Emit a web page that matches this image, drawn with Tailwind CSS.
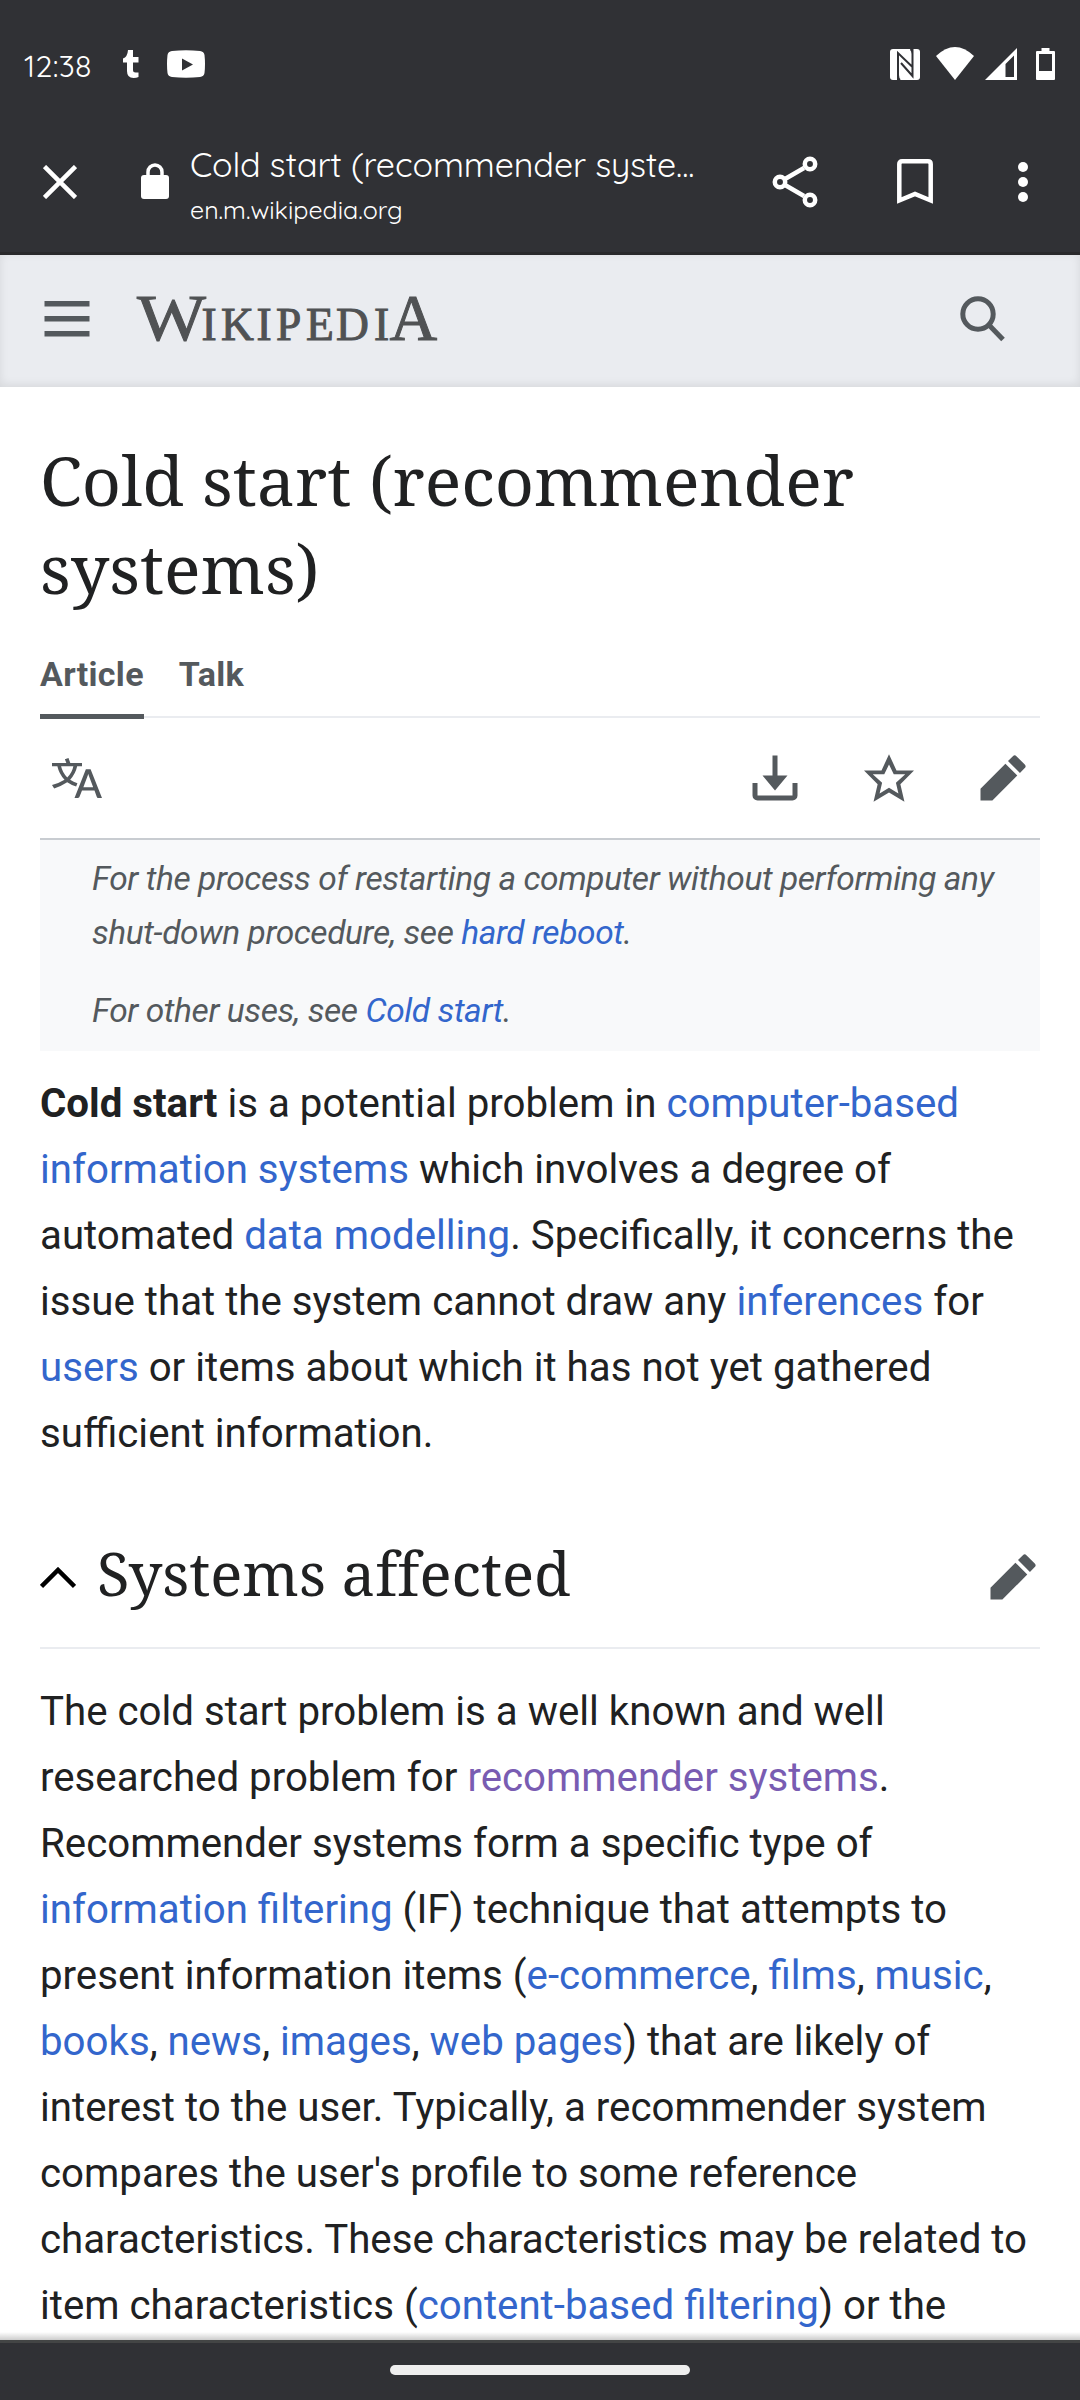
<!DOCTYPE html>
<html lang="en">
<head>
<meta charset="utf-8">
<title>Cold start (recommender systems)</title>
<script src="https://cdn.jsdelivr.net/npm/@tailwindcss/browser@4"></script>
</head>
<body class="w-[1080px] h-[2400px] overflow-hidden bg-white flex flex-col font-[Roboto,sans-serif] text-[#202122]">
<header class="h-[255px] shrink-0 bg-[#303135] border-b-[3px] border-[#29292b] text-white flex flex-col font-[Quicksand,Lato,sans-serif]">
  <div class="h-[110px] pt-[44px] pl-6 pr-[25px] flex items-start">
    <span class="w-[99px] pt-[4px] text-[30.500px] leading-[36px] tracking-[0.3px] font-normal">12:38</span>
    <svg class="w-[16px] h-[28px] mt-[6px]" viewBox="0 0 16 28" fill="#fff"><path d="M5 0h5v7h5.5v5.500H10v7.500q0 2.500 2.500 2.500h3V27q-2 1-5 1-6.500 0-6.500-7v-8.500H0V8.500Q4.500 7 5 0z"/></svg>
    <svg class="w-[38px] h-[28px] mt-[6px] ml-[28px]" viewBox="0 0 38 28"><path fill="#fff" d="M5 1Q19-.6 33 1q4 .4 4.500 4 1 9 0 18-.5 3.600-4.500 4-14 1.400-28 0-4-.4-4.500-4-1-9 0-18Q1 1.400 5 1z"/><path fill="#303135" d="M15 8.500v12l11-6z"/></svg>
    <div class="flex-1"></div>
    <svg class="w-[30px] h-[31px] mt-[5px]" viewBox="0 0 30 31"><rect width="30" height="31" rx="3" fill="#fff"/><path d="M8 31V4L22.500 18M22.500 0v27L11 14M10 31q-2-1.500-2-5M20.500 0q2 1.500 2 5" fill="none" stroke="#303135" stroke-width="2"/></svg>
    <svg class="w-[38px] h-[33px] mt-[3px] ml-[16px]" viewBox="0 0 38 33"><path fill="#fff" d="M0 9Q19-9 38 9L19 33z"/></svg>
    <svg class="w-[32px] h-[32px] mt-[4px] ml-[11px]" viewBox="0 0 32 32"><path fill="#fff" fill-rule="evenodd" d="M32 0v32H0zM29 7.500L20.500 16v13H29z"/></svg>
    <svg class="w-[19px] h-[32px] mt-[4px] ml-[19px]" viewBox="0 0 19 32"><path fill="#fff" fill-rule="evenodd" d="M5.500 0h8v3H18q1 0 1 1v27q0 1-1 1H1q-1 0-1-1V4q0-1 1-1h4.500zM3 6v17h13V6z"/></svg>
  </div>
  <div class="h-[142px] flex items-start pl-[43px]">
    <svg class="w-[34px] h-[34px] mt-[55px]" viewBox="0 0 34 34"><path d="M1.500 1.500l31 31m0-31l-31 31" stroke="#fff" stroke-width="4.500"/></svg>
    <svg class="w-[28px] h-[36px] mt-[53px] ml-[64px]" viewBox="0 0 28 36"><rect y="12" width="28" height="24" rx="3" fill="#fff"/><path d="M7 14V9a7 7 0 0 1 14 0v5" fill="none" stroke="#fff" stroke-width="3.500"/></svg>
    <div class="w-[582px] ml-[21px] pt-[33px] whitespace-nowrap">
      <div class="text-[34px] leading-[44px] tracking-[-0.1px] font-normal">Cold start (recommender syste...</div>
      <div class="text-[25px] leading-[34px] mt-[6px]">en.m.wikipedia.org</div>
    </div>
    <svg class="w-[46px] h-[52px] mt-[46px]" viewBox="0 0 46 52" fill="none" stroke="#fff" stroke-width="4.500"><path d="M13 23L32 12M13 29L32 40"/><circle cx="8" cy="26" r="5.200"/><circle cx="38" cy="8" r="5.200"/><circle cx="38" cy="44" r="5.200"/></svg>
    <svg class="w-[36px] h-[46px] mt-[49px] ml-[79px]" viewBox="0 0 36 46"><path d="M2.300 41.500V5q0-2.700 2.700-2.700h26q2.700 0 2.700 2.700v36.500L18 35z" fill="none" stroke="#fff" stroke-width="4.500"/></svg>
    <svg class="w-[10px] h-[42px] mt-[51px] ml-[85px]" viewBox="0 0 10 42" fill="#fff"><circle cx="5" cy="6" r="5"/><circle cx="5" cy="21" r="5"/><circle cx="5" cy="36" r="5"/></svg>
  </div>
</header>
<div class="h-[132px] shrink-0 bg-[#eaecf0] shadow-[inset_0_-2px_10px_rgba(0,0,0,0.09)] flex items-start pl-[44px] pr-[74px]">
  <svg class="w-[46px] h-[36px] mt-[46px]" viewBox="0 0 46 36" fill="#54595d"><path d="M.5 0h45v5.500H.5zM.5 15h45v5.500H.5zM.5 30h45v5.500H.5z"/></svg>
  <svg class="w-[304px] h-[92px] mt-[16px] ml-[46px]" viewBox="136 271 304 92" fill="#505254" stroke="#505254" stroke-width="1" font-family="'Liberation Serif',serif" font-size="66"><text y="340"><tspan x="137" textLength="69" lengthAdjust="spacingAndGlyphs">W</tspan><tspan font-size="45.500" x="201.500 221 256.500 276 306 336 374">IKIPEDI</tspan><tspan x="389.500">A</tspan></text></svg>
  <div class="flex-1"></div>
  <svg class="w-[46px] h-[46px] mt-[41px]" viewBox="0 0 46 46" fill="none" stroke="#54595d" stroke-width="5"><circle cx="18" cy="18" r="15.200"/><path d="M28.500 28.500L43 43.500"/></svg>
</div>
<main class="h-[1953px] shrink-0 overflow-hidden px-10 whitespace-nowrap flex flex-col">
  <h1 class="mt-[49px] h-[178px] text-[68.200px] leading-[88px] font-['Noto_Serif','DejaVu_Serif_Condensed','DejaVu_Serif',serif]">Cold start (recommender<br>systems)</h1>
  <nav class="mt-[34px] h-[71px] flex gap-[35px] items-start text-[34px] leading-[52px] tracking-[0.3px] font-bold text-[#54595d] bg-[linear-gradient(#eaecf0,#eaecf0)] bg-no-repeat bg-[length:100%_2px] bg-[position:0_68px]">
    <a class="h-[71px] border-b-[5px] border-[#54595d]">Article</a><a>Talk</a>
  </nav>
  <div class="h-[121px] border-b-2 border-[#c8ccd1] flex items-start pt-[34px] pl-3 pr-[12px] text-[#54595d]">
    <svg class="w-[50px] h-[50px]" viewBox="0 0 20 20" fill="currentColor"><path d="M20 18h-1.440a.61.61 0 0 1-.4-.12.81.81 0 0 1-.23-.31L17 15h-5l-1 2.540a.77.77 0 0 1-.22.3.59.59 0 0 1-.4.14H9l4.550-11.470h1.890zm-3.530-4.310L14.890 9.500a11.620 11.620 0 0 1-.39-1.240q-.09.37-.19.69l-.19.56-1.580 4.190zm-6.300-1.580a13.430 13.430 0 0 1-2.910-1.410 11.460 11.460 0 0 0 2.810-5.370H12V4H7.310a4 4 0 0 0-.2-.56C6.870 2.790 6.600 2 6.600 2l-1.470.5s.4.89.6 1.500H0v1.330h2.150A11.230 11.230 0 0 0 5 10.700a17.190 17.190 0 0 1-5 2.100q.56.82.87 1.380a23.280 23.280 0 0 0 5.220-2.510 15.640 15.640 0 0 0 3.560 1.770zM3.630 5.330h4.910a8.110 8.110 0 0 1-2.450 4.450 9.110 9.110 0 0 1-2.460-4.450z"/></svg>
    <div class="flex-1"></div>
    <svg class="w-[50px] h-[50px]" viewBox="0 0 20 20" fill="currentColor"><path d="M17 12v5H3v-5H1v5a2 2 0 0 0 2 2h14a2 2 0 0 0 2-2v-5zM15 9h-4V1H9v8H5l5 6z"/></svg>
    <svg class="w-[50px] h-[50px] ml-16" viewBox="0 0 20 20" fill="currentColor"><path d="M20 7h-7L10 .5 7 7H0l5.460 5.470-1.640 7 6.180-3.700 6.180 3.730-1.630-7zm-10 6.900-3.760 2.270 1-4.280L3.500 8.500h4.610L10 4.600l1.900 3.900h4.600l-3.730 3.400 1 4.280z"/></svg>
    <svg class="w-[50px] h-[50px] ml-16" viewBox="0 0 20 20" fill="currentColor"><path d="m16.770 8 1.940-2a1 1 0 0 0 0-1.410l-3.340-3.300a1 1 0 0 0-1.410 0L12 3.230zM1 14.250V19h4.750l9.960-9.960-4.750-4.750z"/></svg>
  </div>
  <div class="h-[211px] bg-[#f8f9fa] pl-[52px] pt-[12px] text-[33.500px] tracking-[-0.41px] leading-[54px] italic text-[#54595d]">
    <p>For the process of restarting a computer without performing any<br>shut-down procedure, see <a class="text-[#3366cc]">hard reboot</a>.</p>
    <p class="mt-6">For other uses, see <a class="text-[#3366cc]">Cold start</a>.</p>
  </div>
  <p class="mt-[20px] text-[40.240px] leading-[66px]"><b>Cold start</b> is a potential problem in <a class="text-[#3366cc]">computer-based<br>information systems</a> which involves a degree of<br>automated <a class="text-[#3366cc]">data modelling</a>. Specifically, it concerns the<br>issue that the system cannot draw any <a class="text-[#3366cc]">inferences</a> for<br><a class="text-[#3366cc]">users</a> or items about which it has not yet gathered<br>sufficient information.</p>
  <div class="mt-[69px] h-[113px] border-b-2 border-[#eaecf0] flex items-start pr-[2px]">
    <svg class="w-[36px] h-[22px] mt-[31px]" viewBox="0 0 36 22"><path d="M1.500 19.500L18 3l16.500 16.500" fill="none" stroke="#000" stroke-width="4.500"/></svg>
    <h2 class="-mt-[2px] ml-[21px] text-[59.900px] leading-[78px] font-['Noto_Serif','DejaVu_Serif_Condensed','DejaVu_Serif',serif] [font-variant-ligatures:none]">Systems affected</h2>
    <div class="flex-1"></div>
    <svg class="w-[50px] h-[50px] mt-[16px] text-[#54595d]" viewBox="0 0 20 20" fill="currentColor"><path d="m16.770 8 1.940-2a1 1 0 0 0 0-1.410l-3.340-3.300a1 1 0 0 0-1.410 0L12 3.230zM1 14.250V19h4.750l9.960-9.960-4.750-4.750z"/></svg>
  </div>
  <p class="mt-[30px] text-[40.240px] leading-[66px]">The cold start problem is a well known and well<br>researched problem for <a class="text-[#795cb2]">recommender systems</a>.<br>Recommender systems form a specific type of<br><a class="text-[#3366cc]">information filtering</a> (IF) technique that attempts to<br>present information items (<a class="text-[#3366cc]">e-commerce</a>, <a class="text-[#3366cc]">films</a>, <a class="text-[#3366cc]">music</a>,<br><a class="text-[#3366cc]">books</a>, <a class="text-[#3366cc]">news</a>, <a class="text-[#3366cc]">images</a>, <a class="text-[#3366cc]">web pages</a>) that are likely of<br>interest to the user. Typically, a recommender system<br>compares the user's profile to some reference<br>characteristics. These characteristics may be related to<br>item characteristics (<a class="text-[#3366cc]">content-based filtering</a>) or the</p>
</main>
<footer class="relative h-[60px] shrink-0 bg-[#303135] border-t-[3px] border-[#434545] flex justify-center pt-[22px]">
  <div class="absolute inset-x-0 -top-[11px] h-[8px] bg-linear-to-b from-black/0 to-black/20"></div>
  <div class="w-[300px] h-[10px] rounded-full bg-[#eeeeee]"></div>
</footer>
</body>
</html>
